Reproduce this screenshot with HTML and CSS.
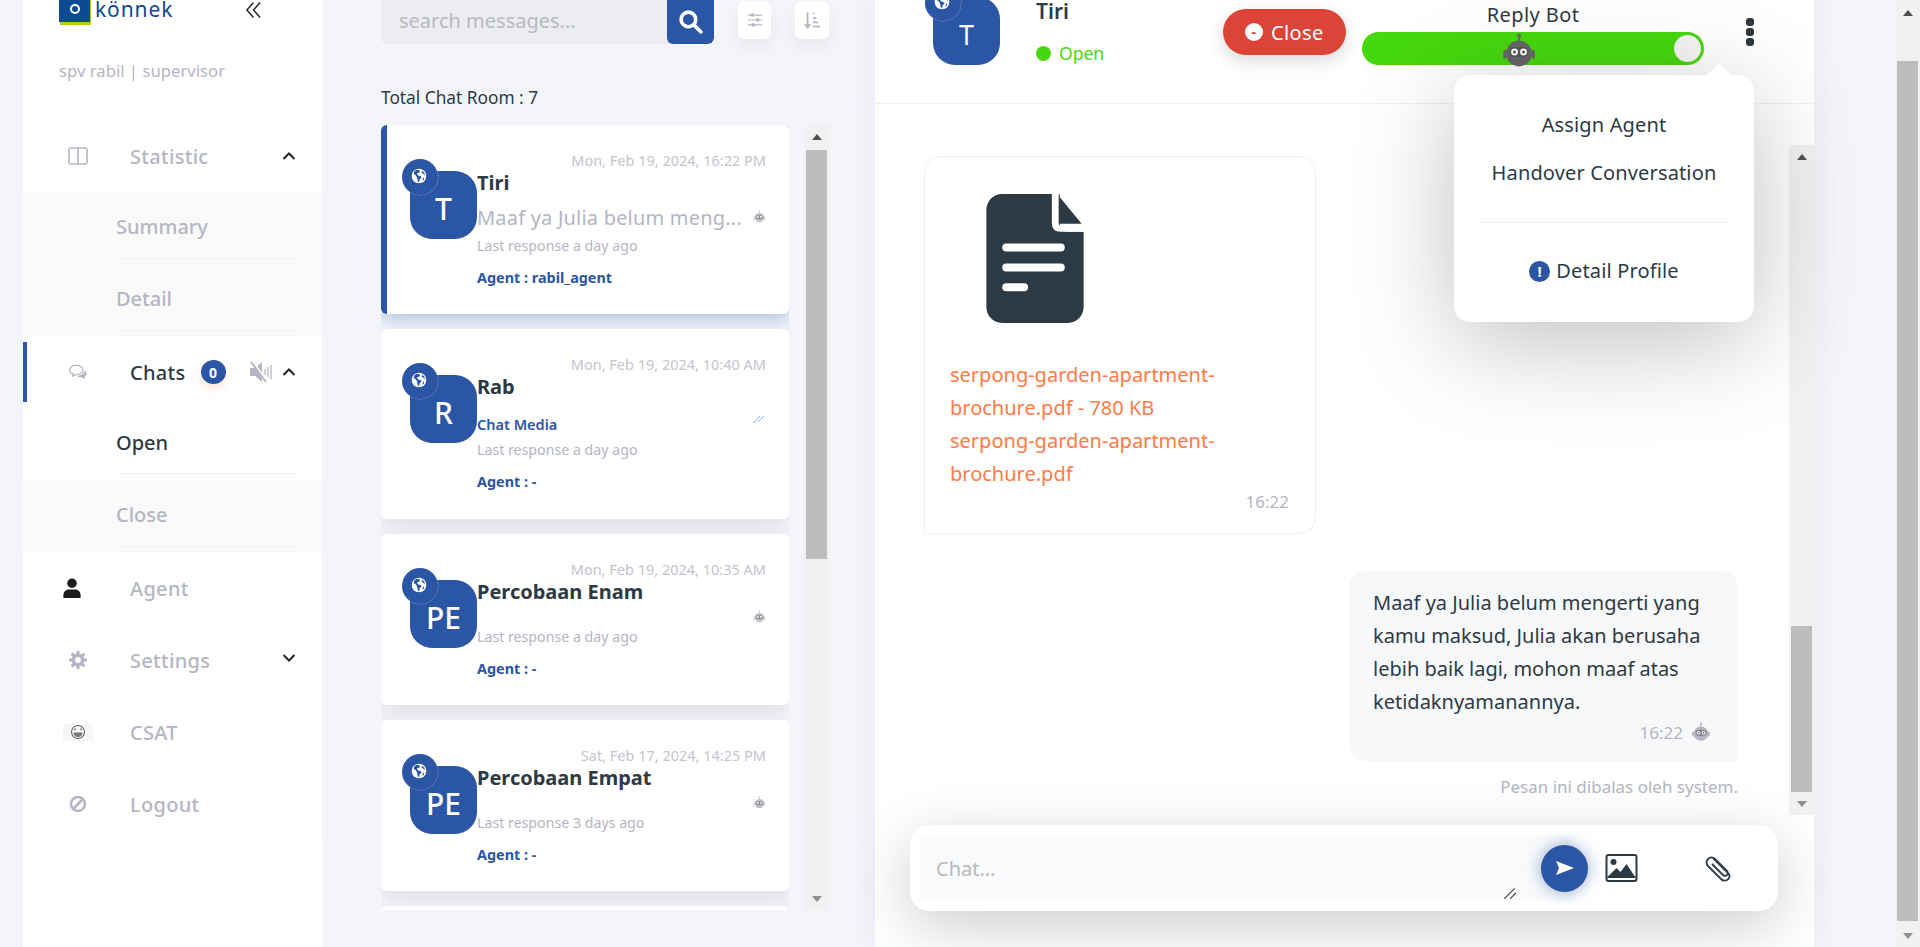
FILE: index.html
```html
<!DOCTYPE html>
<html lang="en">
  <head>
    <meta charset="UTF-8" />
    <meta name="viewport" content="width=device-width, initial-scale=1.0" />
    <title>Konnek Chats</title>
    <link rel="stylesheet" href="styles.css">
  </head>
  <body>
    <svg class="icon-defs" aria-hidden="true">
      <symbol id="i-globe" viewBox="0 0 24 24">
        <circle cx="12" cy="12" r="11" fill="#fff" />
        <path fill="#2b55a5" d="M9 2.5 5 5l-1 4 3 2 2 3 1 5 2 3 1-5 3-3-2-2-4-1-1-3 3-1 2-3zM17 4l-1 3 3 2 2 2-1-4zM20 14l-2 1-1 4 2-1z" />
      </symbol>
      <symbol id="i-robot" viewBox="0 0 24 24">
        <circle cx="12" cy="2" r="1.4" fill="currentColor" />
        <rect x="11.4" y="2" width="1.2" height="4" fill="currentColor" />
        <circle cx="12" cy="14" r="8.6" fill="currentColor" />
        <rect x="1.5" y="11.5" width="2" height="6" rx="1" fill="currentColor" />
        <rect x="20.5" y="11.5" width="2" height="6" rx="1" fill="currentColor" />
        <rect x="5.5" y="9.6" width="13" height="6.8" rx="3.4" fill="#4a4a4a" opacity=".55" />
        <circle cx="9" cy="13" r="2.3" fill="#fff" />
        <circle cx="15" cy="13" r="2.3" fill="#fff" />
        <circle cx="9" cy="13" r="1" fill="#555" />
        <circle cx="15" cy="13" r="1" fill="#555" />
      </symbol>
      <symbol id="i-chev-up" viewBox="0 0 14 10">
        <path d="M1.5 8 7 2.5 12.5 8" fill="none" stroke="currentColor" stroke-width="2" />
      </symbol>
    </svg>

    <div class="page">
      <aside class="sidebar">
        <div class="brand">
          <div class="logo">
            <span class="logo-mark"><span class="logo-o"></span></span>
            <span class="logo-text">könnek</span>
          </div>
          <svg class="collapse-icon" viewBox="0 0 18 18"><path d="M9 1 2 9l7 8M16 1 9 9l7 8" fill="none" stroke="#222" stroke-width="1.5" /></svg>
        </div>
        <div class="user-line">spv rabil | supervisor</div>

        <nav class="menu">
          <div class="menu-row">
            <svg class="menu-icon" viewBox="0 0 20 18"><rect x="1" y="1" width="18" height="16" rx="1.5" fill="none" stroke="#b5b5c3" stroke-width="1.6" /><path d="M10 1v16" stroke="#b5b5c3" stroke-width="1.6" /></svg>
            <span class="menu-label">Statistic</span>
            <svg class="chev"><use href="#i-chev-up" /></svg>
          </div>
          <div class="sub-group">
            <div class="sub-row"><span class="sub-label">Summary</span></div>
            <div class="sub-row"><span class="sub-label">Detail</span></div>
          </div>

          <div class="menu-row is-active">
            <svg class="menu-icon" viewBox="0 0 24 20"><path d="M10 2c4.400 0 8 2.400 8 5.500S14.400 13 10 13l-4.500 2 1-2.800C3.600 11.400 2 9.600 2 7.500 2 4.400 5.600 2 10 2z" fill="none" stroke="#b5b5c3" stroke-width="1.5" /><path d="M20 8c1.500 1 2.400 2.300 2.400 3.800 0 1.600-1 3-2.600 3.900l1 3-4.500-2.400c-2.200 0-4-.6-5.300-1.800 4.600.3 9-2.400 9-6.500z" fill="#b5b5c3" /></svg>
            <span class="menu-label">Chats</span>
            <span class="count-badge">0</span>
            <svg class="mute-icon" viewBox="0 0 24 22"><path d="M1 7h5l7-6v20l-7-6H1z" fill="#b5b5c3" /><path d="M16 8v6M19 6v10M22 4v14" stroke="#b5b5c3" stroke-width="1.3" /><path d="M3 1l15 20" stroke="#fff" stroke-width="3.500" /><path d="M2 1l15 20" stroke="#b5b5c3" stroke-width="2" /></svg>
            <svg class="chev"><use href="#i-chev-up" /></svg>
          </div>
          <div class="sub-group">
            <div class="sub-row is-current"><span class="sub-label">Open</span></div>
            <div class="sub-row"><span class="sub-label">Close</span></div>
          </div>

          <div class="menu-row">
            <svg class="menu-icon menu-icon-person" viewBox="0 0 20 22"><circle cx="10" cy="5.500" r="5" fill="#1c1c1c" /><path d="M1 21v-3c0-4 3-6 6-6h6c3 0 6 2 6 6v3z" fill="#1c1c1c" /></svg>
            <span class="menu-label">Agent</span>
          </div>
          <div class="menu-row">
            <svg class="menu-icon" viewBox="0 0 20 20"><circle cx="10" cy="10" r="5.200" fill="none" stroke="#b5b5c3" stroke-width="4" /><path d="M10 0v4M10 16v4M0 10h4M16 10h4M3 3l3 3M14 14l3 3M17 3l-3 3M6 14l-3 3" stroke="#b5b5c3" stroke-width="3.500" /></svg>
            <span class="menu-label">Settings</span>
            <svg class="chev chev-down"><use href="#i-chev-up" /></svg>
          </div>
          <div class="menu-row">
            <span class="csat-icon"><svg viewBox="0 0 18 18"><circle cx="9" cy="9" r="7.300" fill="none" stroke="#666" stroke-width="1.200" /><path d="M4 9.500h10c0 3-2 5-5 5s-5-2-5-5z" fill="#777" /><path d="M4.500 6.500l2-1.200M13.500 6.500l-2-1.200" stroke="#666" stroke-width="1.200" /></svg></span>
            <span class="menu-label">CSAT</span>
          </div>
          <div class="menu-row">
            <svg class="menu-icon" viewBox="0 0 20 20"><circle cx="10" cy="10" r="7.800" fill="none" stroke="#b5b5c3" stroke-width="2.800" /><path d="M15 5 5 15" stroke="#b5b5c3" stroke-width="2.800" /></svg>
            <span class="menu-label">Logout</span>
          </div>
        </nav>
      </aside>

      <section class="rooms">
        <div class="search-bar">
          <div class="search-box">
            <span class="search-input">search messages...</span>
            <span class="search-btn">
              <svg viewBox="0 0 24 24"><circle cx="10" cy="10" r="7" fill="none" stroke="#fff" stroke-width="3.500" /><path d="m15.500 15.500 6.500 6.500" stroke="#fff" stroke-width="3.500" stroke-linecap="round" /></svg>
            </span>
          </div>
          <span class="tool-btn">
            <svg viewBox="0 0 18 16"><path d="M1 2.500h16M1 8h16M1 13.500h16" stroke="#b5b5c3" stroke-width="1.400" /><circle cx="6" cy="2.500" r="2" fill="#b5b5c3" /><circle cx="12" cy="8" r="2" fill="#b5b5c3" /><circle cx="7" cy="13.500" r="2" fill="#b5b5c3" /></svg>
          </span>
          <span class="tool-btn tool-btn-sort">
            <svg viewBox="0 0 18 20"><path d="M4 1v16M1 14l3 4 3-4" fill="none" stroke="#b5b5c3" stroke-width="2" /><path d="M10 2h2M10 7h4M10 12h6M10 17h8" stroke="#b5b5c3" stroke-width="2" /></svg>
          </span>
        </div>
        <div class="room-total">Total Chat Room : 7</div>

        <div class="room-scroll">
          <div class="room-list">
            <article class="room-card is-selected">
              <div class="room-avatar">T<span class="channel-badge"><svg><use href="#i-globe" /></svg></span></div>
              <div class="room-body">
                <div class="room-date">Mon, Feb 19, 2024, 16:22 PM</div>
                <div class="room-name">Tiri</div>
                <div class="room-preview"><span class="preview-text">Maaf ya Julia belum meng...</span><svg class="mini-robot"><use href="#i-robot" /></svg></div>
                <div class="room-last">Last response a day ago</div>
                <div class="room-agent">Agent : rabil_agent</div>
              </div>
            </article>

            <article class="room-card">
              <div class="room-avatar">R<span class="channel-badge"><svg><use href="#i-globe" /></svg></span></div>
              <div class="room-body">
                <div class="room-date">Mon, Feb 19, 2024, 10:40 AM</div>
                <div class="room-name">Rab</div>
                <div class="room-preview"><span class="preview-media">Chat Media</span><svg class="read-ticks" viewBox="0 0 14 8"><path d="M1 6l1.500 1.500L8 1M6 7l6-6" fill="none" stroke="#5aa2e8" stroke-width=".8" /></svg></div>
                <div class="room-last">Last response a day ago</div>
                <div class="room-agent">Agent : -</div>
              </div>
            </article>

            <article class="room-card room-card-short">
              <div class="room-avatar">PE<span class="channel-badge"><svg><use href="#i-globe" /></svg></span></div>
              <div class="room-body">
                <div class="room-date">Mon, Feb 19, 2024, 10:35 AM</div>
                <div class="room-name">Percobaan Enam</div>
                <div class="room-preview"><span class="preview-text"></span><svg class="mini-robot"><use href="#i-robot" /></svg></div>
                <div class="room-last">Last response a day ago</div>
                <div class="room-agent">Agent : -</div>
              </div>
            </article>

            <article class="room-card room-card-short">
              <div class="room-avatar">PE<span class="channel-badge"><svg><use href="#i-globe" /></svg></span></div>
              <div class="room-body">
                <div class="room-date">Sat, Feb 17, 2024, 14:25 PM</div>
                <div class="room-name">Percobaan Empat</div>
                <div class="room-preview"><span class="preview-text"></span><svg class="mini-robot"><use href="#i-robot" /></svg></div>
                <div class="room-last">Last response 3 days ago</div>
                <div class="room-agent">Agent : -</div>
              </div>
            </article>

            <article class="room-card"></article>
          </div>

          <div class="scrollbar scrollbar-rooms">
            <span class="arrow-up"></span>
            <span class="thumb"></span>
            <span class="arrow-down"></span>
          </div>
        </div>
      </section>

      <section class="chat-panel">
        <header class="chat-head">
          <div class="head-avatar">T<span class="channel-badge"><svg><use href="#i-globe" /></svg></span></div>
          <div class="head-info">
            <div class="head-name">Tiri</div>
            <div class="head-status"><span class="status-dot"></span>Open</div>
          </div>
          <button class="close-btn"><span class="close-dot">-</span>Close</button>
          <div class="reply-bot">
            <div class="reply-label">Reply Bot</div>
            <div class="reply-toggle">
              <svg class="toggle-robot"><use href="#i-robot" /></svg>
              <span class="toggle-knob"></span>
            </div>
          </div>
          <div class="more-dots"><span></span><span></span><span></span></div>

          <div class="head-menu">
            <div class="head-menu-item">Assign Agent</div>
            <div class="head-menu-item">Handover Conversation</div>
            <hr class="head-menu-line" />
            <div class="head-menu-item head-menu-detail">
              <span class="info-dot">!</span>Detail Profile
            </div>
          </div>
        </header>

        <div class="chat-body">
          <div class="messages">
            <div class="file-msg">
              <svg class="doc-icon" viewBox="0 0 98 130">
                <path d="M16 0h58v30c0 5 3 8 8 8h16v76c0 9-7 16-16 16H16c-9 0-16-7-16-16V16C0 7 7 0 16 0z" fill="#2d3a44" />
                <path d="M66 0h7v30c0 1 1 2 2 2h23v6H75c-6 0-9-3-9-9z" fill="#fff" />
                <path d="M73 2l23 28H73z" fill="#2d3a44" />
                <rect x="16" y="50" width="63" height="8" rx="4" fill="#fff" />
                <rect x="16" y="70" width="63" height="8" rx="4" fill="#fff" />
                <rect x="16" y="90" width="26" height="8" rx="4" fill="#fff" />
              </svg>
              <div class="file-link">serpong-garden-apartment-brochure.pdf - 780 KB<br />serpong-garden-apartment-brochure.pdf</div>
              <div class="msg-time">16:22</div>
            </div>

            <div class="bot-msg">
              <div class="bot-text">Maaf ya Julia belum mengerti yang kamu maksud, Julia akan berusaha lebih baik lagi, mohon maaf atas ketidaknyamanannya.</div>
              <div class="bot-meta">16:22 <svg class="meta-robot"><use href="#i-robot" /></svg></div>
            </div>
            <div class="bot-note">Pesan ini dibalas oleh system.</div>
          </div>

          <div class="scrollbar scrollbar-chat">
            <span class="arrow-up"></span>
            <span class="thumb"></span>
            <span class="arrow-down"></span>
          </div>
        </div>

        <div class="composer">
          <div class="composer-input">
            <span class="composer-hint">Chat...</span>
            <svg class="resize-mark" viewBox="0 0 12 12"><path d="M1 11 10 2M6 11l5-5" stroke="#444" stroke-width="1" /></svg>
          </div>
          <span class="send-btn"><svg viewBox="0 0 20 16"><path d="M1 1l18 7-18 7 3-7z" fill="#fff" /></svg></span>
          <svg class="attach-image" viewBox="0 0 32 28"><rect x="1" y="1" width="30" height="26" rx="2" fill="#fff" stroke="#2d3a44" stroke-width="2" /><path d="M3 22l8-8 4 4 6-8 8 12z" fill="#2d3a44" /><circle cx="8" cy="8" r="3" fill="#2d3a44" /><rect x="2" y="22" width="28" height="2" fill="#2d3a44" /></svg>
          <svg class="attach-clip" viewBox="0 0 28 28"><path d="M8 4 23 19c3 3 1 6-1 7s-4 1-6-1L3 12C1 10 1 7 3 5s5-2 7 0l12 12c1 1 1 3 0 4s-3 1-4 0L7 10" fill="none" stroke="#2d3a44" stroke-width="1.800" /></svg>
        </div>
      </section>

      <div class="scrollbar scrollbar-page">
        <span class="arrow-up"></span>
        <span class="thumb"></span>
        <span class="arrow-down"></span>
      </div>
    </div>
  </body>
</html>
```
FILE: styles.css
```css
* {
  box-sizing: border-box;
}

html,
body {
  height: 100%;
}

body {
  margin: 0;
  font-family: "Noto Sans", "Open Sans", sans-serif;
  background-color: #f4f5fb;
  color: #2d3a44;
  overflow: hidden;
}

.icon-defs {
  display: none;
}

/* page is scrolled down a little in the screenshot */
.page {
  display: flex;
  height: 971px;
  margin-top: -24px;
}

/* sidebar */
.sidebar {
  width: 300px;
  margin-left: 23px;
  background-color: #fff;
  flex-shrink: 0;
}

.brand {
  display: flex;
  align-items: center;
  height: 44px;
  margin-top: 8px;
  padding-left: 36px;
}

.logo {
  display: flex;
  align-items: center;
  width: 186px;
}

.logo-mark {
  display: flex;
  align-items: center;
  justify-content: center;
  width: 31px;
  height: 31px;
  background-color: #0d4a94;
  box-shadow: 1px 3px 0 #b9c81c;
}

.logo-o {
  width: 10px;
  height: 10px;
  border: 2px solid #fff;
  border-radius: 50%;
  margin-top: 6px;
}

.logo-text {
  margin-left: 5px;
  margin-top: 5px;
  color: #0d4a94;
  font-size: 21px;
  letter-spacing: 0.9px;
}

.collapse-icon {
  width: 17px;
  height: 18px;
  margin-top: 8px;
}

.user-line {
  margin-top: 31px;
  padding-left: 36px;
  color: #b5b5c3;
  font-size: 16.7px;
  line-height: 24px;
}

.menu {
  margin-top: 37px;
  border-right: 1px solid #f3f4f8;
}

.menu-row {
  position: relative;
  display: flex;
  align-items: center;
  height: 72px;
  padding-left: 45px;
}

.menu-row.is-active::before {
  content: "";
  position: absolute;
  left: 0;
  top: 6px;
  bottom: 6px;
  width: 4px;
  background-color: #2b55a5;
}

.menu-icon {
  width: 20px;
  height: 18px;
  flex-shrink: 0;
}

.menu-icon-person {
  margin-left: -6px;
  margin-right: 6px;
  height: 21px;
}

.csat-icon {
  display: flex;
  align-items: center;
  justify-content: center;
  width: 30px;
  height: 17px;
  margin-left: -5px;
  margin-right: -5px;
  background-color: #f6f6f6;
}

.csat-icon svg {
  width: 16px;
  height: 16px;
}

.menu-label {
  margin-left: 42px;
  color: #b5b5c3;
  font-size: 20px;
  font-weight: 500;
  letter-spacing: 0.3px;
}

.is-active .menu-label {
  color: #2d3a44;
}

.chev {
  position: absolute;
  left: 259px;
  top: 31px;
  width: 14px;
  height: 10px;
  color: #222;
}

.chev-down {
  top: 29px;
  transform: rotate(180deg);
}

.count-badge {
  display: flex;
  align-items: center;
  justify-content: center;
  width: 25px;
  height: 24px;
  margin-left: 15px;
  border-radius: 50%;
  background-color: #2b55a5;
  color: #fff;
  font-size: 14px;
  font-weight: 700;
  box-shadow: 0 4px 8px rgba(255, 140, 90, 0.25);
}

.mute-icon {
  position: absolute;
  left: 226px;
  top: 25px;
  width: 24px;
  height: 22px;
}

.sub-group {
  background-color: #fafafa;
}

.sub-row {
  height: 72px;
  padding: 22px 0 0 93px;
}

.sub-row::after {
  content: "";
  display: block;
  width: 182px;
  height: 1px;
  margin-top: 18px;
  background-color: #f2f3f7;
}

.sub-label {
  display: block;
  height: 26px;
  color: #b5b5c3;
  font-size: 20px;
  font-weight: 500;
  line-height: 26px;
}

.sub-row.is-current {
  margin-top: 6px;
  height: 66px;
  padding-top: 16px;
  background-color: #fff;
}

.is-current .sub-label {
  color: #2d3a44;
}

.is-current::after {
  margin-top: 17px;
}

/* room list */
.rooms {
  width: 448px;
  margin-left: 58px;
  flex-shrink: 0;
}

.search-bar {
  display: flex;
  height: 68px;
}

.search-box {
  display: flex;
  width: 333px;
  height: 68px;
  border-radius: 0 0 6px 6px;
  background-color: #ebedf2;
  overflow: hidden;
}

.search-input {
  flex: 1;
  padding: 32px 0 0 18px;
  color: #b9b9bd;
  font-size: 20px;
  line-height: 26px;
}

.search-btn {
  display: flex;
  align-items: flex-end;
  justify-content: center;
  width: 47px;
  padding-bottom: 10px;
  background-color: #2b55a5;
  border-radius: 0 0 6px 6px;
}

.search-btn svg {
  width: 25px;
  height: 25px;
}

.tool-btn {
  display: flex;
  align-items: center;
  justify-content: center;
  width: 33px;
  height: 38px;
  margin-top: 25px;
  margin-left: 24px;
  border-radius: 6px;
  background-color: #fff;
  box-shadow: 0 8px 16px rgba(0, 0, 0, 0.05);
}

.tool-btn svg {
  width: 16px;
  height: 16px;
}

.tool-btn-sort {
  width: 34px;
}

.tool-btn-sort svg {
  height: 19px;
}

.room-total {
  margin-top: 42px;
  font-size: 17.3px;
  line-height: 24px;
}

.room-scroll {
  display: flex;
  justify-content: space-between;
  height: 785px;
  margin-top: 15px;
}

.room-list {
  width: 408px;
  height: 785px;
  overflow: hidden;
}

.room-card {
  display: flex;
  flex-shrink: 0;
  height: 190px;
  margin-bottom: 15px;
  padding-left: 29px;
  border-radius: 6px;
  background-color: #fff;
  box-shadow: 0 10px 20px rgba(0, 0, 0, 0.08);
}

.room-card.is-selected {
  height: 189px;
  border-left: 6px solid #2b55a5;
  padding-left: 23px;
  box-shadow: 0 5px 18px rgba(43, 85, 165, 0.35);
}

.room-card-short {
  height: 171px;
}

.room-avatar,
.head-avatar {
  position: relative;
  display: flex;
  align-items: center;
  justify-content: center;
  flex-shrink: 0;
  width: 67px;
  height: 68px;
  border-radius: 22px;
  background-color: #2b55a5;
  color: #fff;
}

.room-avatar {
  margin-top: 46px;
  padding-top: 6px;
  font-size: 30px;
  font-weight: 500;
}

.channel-badge {
  position: absolute;
  left: -8px;
  top: -12px;
  display: flex;
  align-items: center;
  justify-content: center;
  width: 36px;
  height: 36px;
  border-radius: 50%;
  background-color: #2b55a5;
  box-shadow: 0 0 0 0.5px rgba(255, 255, 255, 0.4);
}

.channel-badge svg {
  width: 16px;
  height: 16px;
  margin: -2px 0 0 -2px;
}

.room-body {
  flex: 1;
  min-width: 0;
  padding-top: 25px;
  padding-right: 23px;
}

.room-date {
  color: #c4c4ce;
  font-size: 14.5px;
  line-height: 20px;
  text-align: right;
}

.room-name {
  color: #2d3a44;
  font-size: 20px;
  font-weight: 700;
  line-height: 26px;
}

.room-preview {
  display: flex;
  align-items: center;
  justify-content: space-between;
  height: 40px;
}

.room-card-short .room-preview {
  height: 22px;
}

.preview-text {
  margin-top: 3px;
  color: #b5b5c3;
  font-size: 20px;
  letter-spacing: 0.2px;
  white-space: nowrap;
}

.preview-media {
  color: #2b55a5;
  font-size: 14.5px;
  font-weight: 600;
  margin-top: 8px;
}

.mini-robot {
  width: 13px;
  height: 13px;
  color: #c0c0ca;
}

.read-ticks {
  width: 14px;
  height: 8px;
  margin-bottom: 2px;
}

.room-last {
  color: #b5b5c3;
  font-size: 14.2px;
  line-height: 20px;
}

.room-agent {
  margin-top: 12px;
  color: #2b55a5;
  font-size: 14.4px;
  font-weight: 700;
  line-height: 20px;
}

/* fake scrollbars, the thumb position is part of the picture */
.scrollbar {
  display: flex;
  flex-direction: column;
  flex-shrink: 0;
  background-color: #f1f1f1;
}

.arrow-up,
.arrow-down {
  display: block;
  width: 0;
  height: 0;
  margin: 9px auto 0;
  border-left: 5px solid transparent;
  border-right: 5px solid transparent;
  border-bottom: 6px solid #505050;
}

.arrow-down {
  margin: auto auto 8px;
  border-bottom: 0;
  border-top: 6px solid #505050;
  opacity: 0.6;
}

.thumb {
  display: block;
  margin-top: 10px;
  margin-left: 2px;
  margin-right: 2px;
  background-color: #bdbdbd;
}

.scrollbar-rooms {
  width: 25px;
}

.scrollbar-rooms .thumb {
  height: 409px;
}

.scrollbar-chat {
  position: absolute;
  right: 0;
  top: 41px;
  width: 25px;
  height: 670px;
}

.scrollbar-chat .thumb {
  height: 166px;
  margin-top: 466px;
}

.scrollbar-page {
  width: 25px;
  margin-left: auto;
}

.scrollbar-page .arrow-up {
  margin-top: 34px;
}

.scrollbar-page .thumb {
  height: 860px;
  margin-top: 45px;
}

/* chat panel */
.chat-panel {
  position: relative;
  width: 939px;
  margin-left: 46px;
  flex-shrink: 0;
  background-color: #fff;
  box-shadow: 0 0 30px rgba(40, 50, 100, 0.05);
}

.chat-head {
  position: relative;
  display: flex;
  height: 128px;
  border-bottom: 1px solid #eff0f3;
}

.head-avatar {
  margin: 21px 0 0 58px;
  padding-top: 6px;
  font-size: 27px;
}

.head-info {
  width: 187px;
  margin-left: 36px;
  padding-top: 21px;
}

.head-name {
  font-size: 21px;
  font-weight: 600;
  line-height: 28px;
}

.head-status {
  display: flex;
  align-items: center;
  margin-top: 16px;
  color: #46d80e;
  font-size: 17.5px;
  line-height: 24px;
}

.status-dot {
  width: 15px;
  height: 15px;
  margin-right: 8px;
  border-radius: 50%;
  background-color: #46d80e;
}

.close-btn {
  display: flex;
  align-items: center;
  width: 123px;
  height: 46px;
  margin-top: 33px;
  padding: 0 0 0 22px;
  border: 0;
  border-radius: 23px;
  background-color: #dd4438;
  color: #fff;
  font-family: inherit;
  font-size: 20px;
  letter-spacing: 0.4px;
  box-shadow: 0 6px 18px rgba(0, 0, 0, 0.15);
}

.close-dot {
  display: flex;
  align-items: center;
  justify-content: center;
  width: 18px;
  height: 18px;
  margin-right: 8px;
  border-radius: 50%;
  background-color: #fff;
  color: #dd4438;
  font-size: 14px;
  font-weight: 700;
  line-height: 1;
}

.reply-bot {
  width: 342px;
  margin-left: 16px;
  padding-top: 25px;
}

.reply-label {
  height: 31px;
  font-size: 20px;
  letter-spacing: 0.4px;
  line-height: 28px;
  text-align: center;
}

.reply-toggle {
  position: relative;
  height: 33px;
  border-radius: 17px;
  background-color: #46d80e;
}

.toggle-knob {
  position: absolute;
  right: 3px;
  top: 3px;
  width: 27px;
  height: 27px;
  border-radius: 50%;
  background-color: #f5f5f5;
}

.toggle-robot {
  position: absolute;
  left: 139px;
  top: 0;
  width: 36px;
  height: 37px;
  color: #666;
}

.more-dots {
  display: flex;
  flex-direction: column;
  gap: 2px;
  margin: 42px 0 0 42px;
}

.more-dots span {
  width: 8px;
  height: 8px;
  border-radius: 3px;
  background-color: #2d3a44;
}

.head-menu {
  position: absolute;
  left: 579px;
  top: 99px;
  z-index: 3;
  width: 300px;
  height: 247px;
  padding-top: 38px;
  border-radius: 16px;
  background-color: #fff;
  box-shadow: 0 20px 100px rgba(0, 0, 0, 0.25);
}

.head-menu::before {
  content: "";
  position: absolute;
  left: 256px;
  top: -8px;
  width: 18px;
  height: 18px;
  background-color: #fff;
  transform: rotate(45deg);
}

.head-menu-item {
  height: 48px;
  font-size: 20px;
  letter-spacing: 0.15px;
  line-height: 24px;
  text-align: center;
}

.head-menu-line {
  width: 248px;
  height: 1px;
  margin: 13px auto 0;
  border: 0;
  background-color: #f1f2f5;
}

.head-menu-detail {
  display: flex;
  align-items: center;
  justify-content: center;
  height: 24px;
  margin-top: 36px;
}

.info-dot {
  display: flex;
  align-items: center;
  justify-content: center;
  width: 21px;
  height: 21px;
  margin-right: 6px;
  border-radius: 50%;
  background-color: #2b55a5;
  color: #fff;
  font-size: 15px;
  font-weight: 700;
}

.chat-body {
  position: relative;
  height: 711px;
  overflow: hidden;
}

.messages {
  display: flex;
  flex-direction: column;
  padding: 52px 76px 0 49px;
}

.file-msg {
  width: 392px;
  height: 378px;
  padding: 37px 26px 0 25px;
  border: 1px solid #eff0f3;
  border-radius: 16px 16px 16px 0;
}

.doc-icon {
  display: block;
  width: 98px;
  height: 129px;
  margin-left: 36px;
}

.file-link {
  margin-top: 35px;
  color: #ff7a45;
  font-size: 20px;
  line-height: 33px;
}

.msg-time {
  color: #b5b5c3;
  font-size: 17px;
  line-height: 24px;
  text-align: right;
}

.bot-msg {
  align-self: flex-end;
  width: 389px;
  height: 190px;
  margin-top: 37px;
  padding: 15px 27px 0 24px;
  border-radius: 16px 16px 0 16px;
  background-color: #f7f8fa;
}

.bot-text {
  font-size: 20px;
  line-height: 33px;
}

.bot-meta {
  display: flex;
  align-items: center;
  justify-content: flex-end;
  gap: 8px;
  height: 28px;
  color: #b5b5c3;
  font-size: 17px;
}

.meta-robot {
  width: 20px;
  height: 20px;
  color: #b5b5c3;
}

.bot-note {
  align-self: flex-end;
  margin-top: 14px;
  color: #b5b5c3;
  font-size: 17px;
  line-height: 24px;
}

.composer {
  position: absolute;
  left: 35px;
  top: 849px;
  display: flex;
  align-items: center;
  width: 868px;
  height: 86px;
  padding-left: 10px;
  border-radius: 20px;
  background-color: #fff;
  box-shadow: 0 15px 60px rgba(0, 0, 0, 0.2);
}

.composer-input {
  position: relative;
  width: 655px;
  height: 64px;
  padding: 20px 0 0 16px;
  background-color: #f9fafb;
}

.composer-hint {
  color: #b9b9bd;
  font-size: 20px;
  line-height: 26px;
}

.resize-mark {
  position: absolute;
  right: 58px;
  bottom: 0;
  width: 14px;
  height: 14px;
}

.send-btn {
  position: relative;
  display: flex;
  align-items: center;
  justify-content: center;
  width: 47px;
  height: 47px;
  margin-left: -34px;
  border-radius: 50%;
  background-color: #2b55a5;
  box-shadow: 0 0 16px rgba(43, 85, 165, 0.5);
}

.send-btn svg {
  width: 20px;
  height: 16px;
}

.attach-image {
  width: 33px;
  height: 28px;
  margin-left: 17px;
}

.attach-clip {
  width: 30px;
  height: 28px;
  margin-left: 66px;
}
```
